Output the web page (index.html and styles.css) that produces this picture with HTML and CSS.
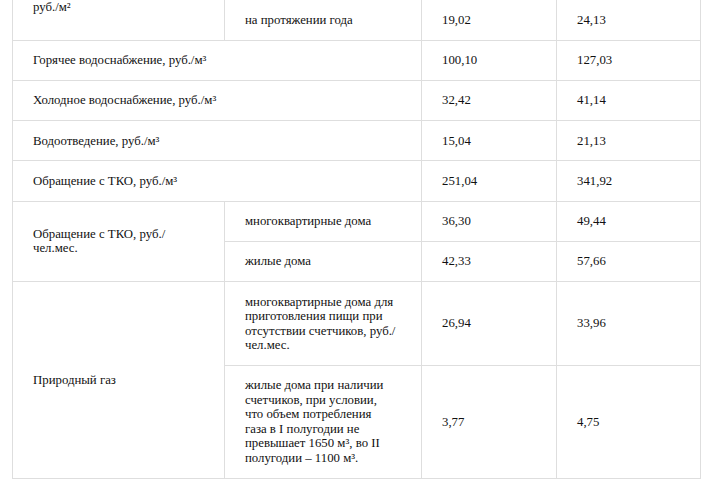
FILE: index.html
```html
<!DOCTYPE html>
<html lang="ru">
<head>
<meta charset="utf-8">
<title>Тарифы</title>
<link rel="stylesheet" href="styles.css">
</head>
<body>
<div class="viewport">
  <table class="tariffs">
    <colgroup>
      <col class="c-name">
      <col class="c-sub">
      <col class="c-v1">
      <col class="c-v2">
    </colgroup>
    <tbody>
      <tr>
        <td rowspan="2">Отопление жилых помещений, руб./м²</td>
        <td>в отопительный период</td>
        <td>38,04</td>
        <td>48,27</td>
      </tr>
      <tr>
        <td>на протяжении года</td>
        <td>19,02</td>
        <td>24,13</td>
      </tr>
      <tr>
        <td colspan="2">Горячее водоснабжение, руб./м³</td>
        <td>100,10</td>
        <td>127,03</td>
      </tr>
      <tr>
        <td colspan="2">Холодное водоснабжение, руб./м³</td>
        <td>32,42</td>
        <td>41,14</td>
      </tr>
      <tr>
        <td colspan="2">Водоотведение, руб./м³</td>
        <td>15,04</td>
        <td>21,13</td>
      </tr>
      <tr>
        <td colspan="2">Обращение с ТКО, руб./м³</td>
        <td>251,04</td>
        <td>341,92</td>
      </tr>
      <tr>
        <td rowspan="2">Обращение с ТКО, руб./чел.мес.</td>
        <td>многоквартирные дома</td>
        <td>36,30</td>
        <td>49,44</td>
      </tr>
      <tr>
        <td>жилые дома</td>
        <td>42,33</td>
        <td>57,66</td>
      </tr>
      <tr>
        <td rowspan="2">Природный газ</td>
        <td>многоквартирные дома для приготовления пищи при отсутствии счетчиков, руб./чел.мес.</td>
        <td>26,94</td>
        <td>33,96</td>
      </tr>
      <tr>
        <td>жилые дома при наличии<br>счетчиков, при условии,<br>что объем потребления<br>газа в I полугодии не<br>превышает 1650 м³, во II<br>полугодии – 1100 м³.</td>
        <td>3,77</td>
        <td>4,75</td>
      </tr>
    </tbody>
  </table>
</div>
</body>
</html>
```

FILE: styles.css
```css
html, body {
  margin: 0;
  padding: 0;
  background: #ffffff;
}

.viewport {
  height: 480px;
  overflow: hidden;
  padding-left: 12px;
}

.tariffs {
  margin-top: -41px;
  border-collapse: collapse;
  table-layout: fixed;
  width: 688px;
  font-family: "Liberation Serif", "Times New Roman", serif;
  font-size: 12.8px;
  line-height: 14.5px;
  color: #111111;
}

.c-name { width: 212px; }
.c-sub { width: 197px; }
.c-v1 { width: 135px; }
.c-v2 { width: 144px; }

.tariffs td {
  border: 1px solid #dedede;
  padding: 12.4px 20px;
  vertical-align: middle;
  text-align: left;
}
```
